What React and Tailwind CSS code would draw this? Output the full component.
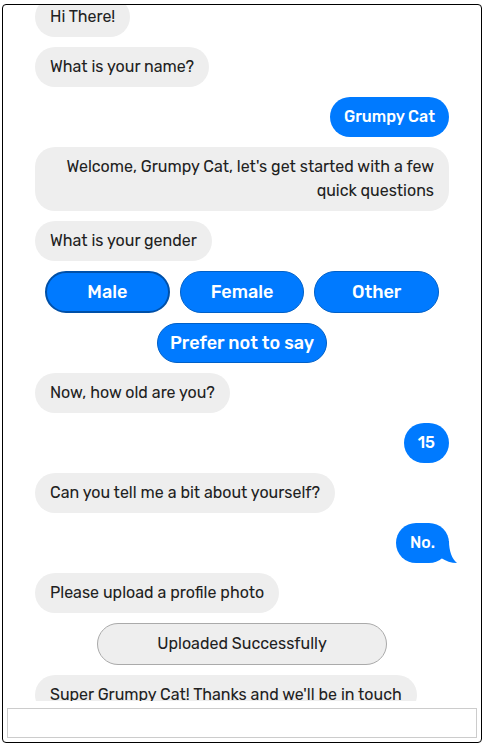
import React from "react";

const font = { fontFamily: "Rubik, 'Noto Sans', 'Open Sans', sans-serif" };

// Incoming grey bubble
function Bot({ children, right }) {
  return (
    <div className="flex">
      <div
        className={`bg-[#eeeeee] text-[#212121] text-[16px] leading-[24px] rounded-[20px] px-[15px] py-[8px] ${
          right ? "text-right w-full" : ""
        }`}
      >
        {children}
      </div>
    </div>
  );
}

// Outgoing blue bubble
function User({ children, tail }) {
  return (
    <div className="flex justify-end">
      <div className="relative bg-[#007aff] text-white font-medium text-[16px] leading-[24px] rounded-[20px] px-[14px] py-[8px]">
        {children}
        {tail && (
          <svg className="absolute right-[-12px] bottom-0" width="20" height="22" viewBox="0 0 20 22">
            <path d="M0 0 L8 0 C8 10 11 18 16 22 C10 22 5 20 0 17 Z" fill="#007aff" />
          </svg>
        )}
      </div>
    </div>
  );
}

function Choice({ label, focused, short }) {
  return (
    <button
      className={`${short ? "h-[40px] rounded-[20px]" : "h-[42px] rounded-[21px]"} bg-[#007aff] text-white text-[18px] font-medium whitespace-nowrap ${
        focused ? "border-2 border-[#0050a8]" : "border border-[#0060c8]"
      }`}
    >
      {label}
    </button>
  );
}

export default function App() {
  return (
    <div className="w-full h-[745px] bg-white pt-[4px] pl-[2px] pr-[3px]" style={font}>
      <div className="h-[739px] border border-black rounded-[4px] flex flex-col px-[4px] pb-[4px]">
        <div className="flex-1 overflow-hidden">
          <div className="flex flex-col gap-[10px] px-[28px] mt-[-8px]">
            <Bot>Hi There!</Bot>
            <Bot>What is your name?</Bot>
            <User>Grumpy Cat</User>
            <Bot right>
              Welcome, Grumpy Cat, let's get started with a few quick questions
            </Bot>
            <Bot>What is your gender</Bot>
            <div className="flex flex-col items-center gap-[10px]">
              <div className="grid grid-cols-3 gap-[10px] w-[394px]">
                <Choice label="Male" focused />
                <Choice label="Female" />
                <Choice label="Other" />
              </div>
              <div className="w-[170px] grid">
                <Choice label="Prefer not to say" short />
              </div>
            </div>
            <Bot>Now, how old are you?</Bot>
            <User>15</User>
            <Bot>Can you tell me a bit about yourself?</Bot>
            <User tail>No.</User>
            <Bot>Please upload a profile photo</Bot>
            <div className="flex justify-center">
              <div className="w-[290px] h-[42px] flex items-center justify-center rounded-[21px] bg-[#eeeeee] border border-[#aaaaaa] text-[#212121] text-[16px]">
                Uploaded Successfully
              </div>
            </div>
            <Bot>Super Grumpy Cat! Thanks and we'll be in touch</Bot>
          </div>
        </div>
        <input className="mt-[7px] h-[30px] w-full border border-[#cccccc] outline-none px-2" />
      </div>
    </div>
  );
}
